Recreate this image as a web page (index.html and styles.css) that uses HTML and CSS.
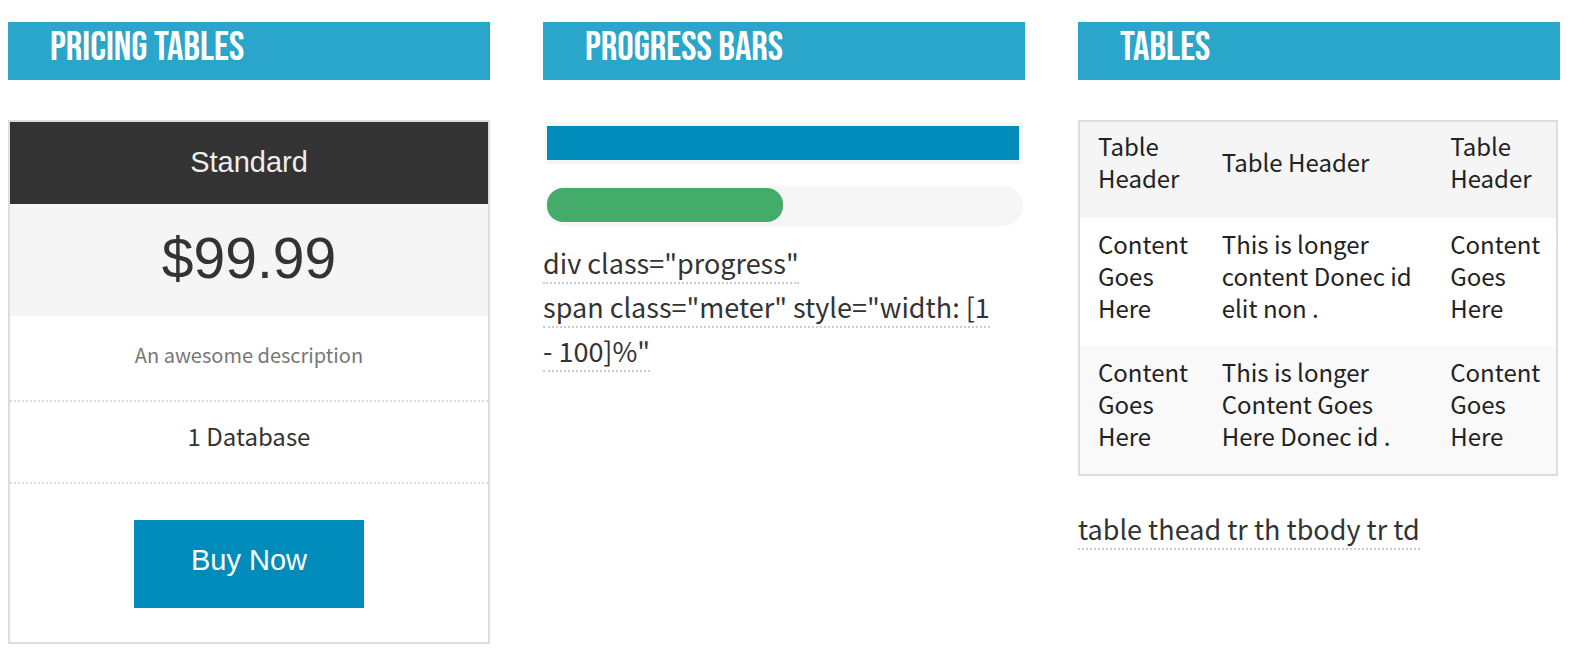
FILE: index.html
```html
<!DOCTYPE html>
<html lang="en">
<head>
<meta charset="utf-8">
<title>Components</title>
<link rel="stylesheet" href="styles.css">
</head>
<body>
<main class="columns">
  <section>
    <h2 class="heading">PRICING TABLES</h2>
    <ul class="pricing">
      <li class="pricing-title">Standard</li>
      <li class="pricing-price">$99.99</li>
      <li class="pricing-description">An awesome description</li>
      <li class="pricing-item">1 Database</li>
      <li class="pricing-cta"><a class="button" href="#">Buy Now</a></li>
    </ul>
  </section>
  <section>
    <h2 class="heading">PROGRESS BARS</h2>
    <div class="progress" role="progressbar" aria-label="Complete" aria-valuenow="100"><span class="meter" style="width: 100%"></span></div>
    <div class="progress round" role="progressbar" aria-label="Halfway" aria-valuenow="50"><span class="meter success" style="width: 50%"></span></div>
    <p class="usage"><span class="snippet">div class="progress"</span><br><span class="snippet">span class="meter" style="width: [1 <span class="keep">- 100]%"</span></span></p>
  </section>
  <section>
    <h2 class="heading">TABLES</h2>
    <table class="data">
      <colgroup><col class="col-side"><col class="col-main"><col class="col-side"></colgroup>
      <thead>
        <tr><th>Table Header</th><th>Table Header</th><th>Table Header</th></tr>
      </thead>
      <tbody>
        <tr><td>Content Goes Here</td><td>This is longer content Donec id elit non .</td><td>Content Goes Here</td></tr>
        <tr><td>Content Goes Here</td><td>This is longer Content Goes Here Donec id .</td><td>Content Goes Here</td></tr>
      </tbody>
    </table>
    <p class="usage"><span class="snippet">table thead tr th tbody tr td</span></p>
  </section>
</main>
</body>
</html>
```
FILE: styles.css
```css
* { box-sizing: border-box; }

body {
  margin: 0;
  background: #fff;
  color: #333;
  font-family: "Noto Sans CJK SC", "Open Sans", sans-serif;
}

.columns {
  display: grid;
  grid-template-columns: repeat(3, minmax(0, 1fr));
  gap: 53px;
  padding: 22px 34px 4px 8px;
}

.heading {
  margin: 0 0 40px;
  padding: 6px 42px 12px;
  background: #2ba6cb;
  color: #fff;
  font: 400 41px/40px "Bebas Neue", "Open Sans Condensed", "Roboto Condensed", "Liberation Sans Narrow", sans-serif;
}

.pricing {
  margin: 0;
  padding: 0;
  border: 2px solid #ddd;
  list-style: none;
  text-align: center;
}

.pricing-title {
  padding: 19px 20px 21px;
  background: #333;
  color: #eee;
  font: 29px/42px "Liberation Sans", sans-serif;
}

.pricing-price {
  padding: 18px 20px 22px;
  background: #f5f5f5;
  font: 57px/72px "Liberation Sans", sans-serif;
}

.pricing-description {
  padding: 23px 20px 29px;
  border-bottom: 2px dotted #ddd;
  color: #777;
  font-size: 20px;
  line-height: 32px;
}

.pricing-item {
  padding: 18px 20px 30px;
  border-bottom: 2px dotted #ddd;
  font-size: 24px;
  line-height: 32px;
}

.pricing-cta {
  display: flex;
  justify-content: center;
  padding: 36px 20px 34px;
}

.button {
  padding: 24px 57px 32px;
  background: #008cba;
  color: #fff;
  font: 29px/32px "Liberation Sans", sans-serif;
  text-decoration: none;
}

.progress {
  height: 42px;
  margin: 0 2px 22px;
  padding: 4px 4px 4px 2px;
  background: #f6f6f6;
}

.heading + .progress { margin-top: 42px; }

.meter {
  display: block;
  height: 34px;
  background: #008cba;
}

.round {
  height: 40px;
  margin-bottom: 15px;
  padding-top: 2px;
  border-radius: 20px;
}

.round .meter { border-radius: 16px; }

.success { background: #43ac6a; }

.usage {
  margin: 0;
  font-size: 27px;
  line-height: 44px;
}

.snippet { border-bottom: 2px dotted #ccc; }

.keep { white-space: nowrap; }

.data {
  width: calc(100% - 2px);
  margin-bottom: 31px;
  border: 2px solid #ddd;
  border-spacing: 0;
  table-layout: fixed;
  color: #222;
  font-size: 24px;
  line-height: 32px;
}

.col-side { width: 26%; }
.col-main { width: 48%; }

.data th {
  padding: 8px 12px 24px 18px;
  background: #f5f5f5;
  font-weight: 400;
  text-align: left;
}

.data td { padding: 10px 12px 22px 18px; }

.data tbody tr:nth-child(even) { background: #f9f9f9; }
```
